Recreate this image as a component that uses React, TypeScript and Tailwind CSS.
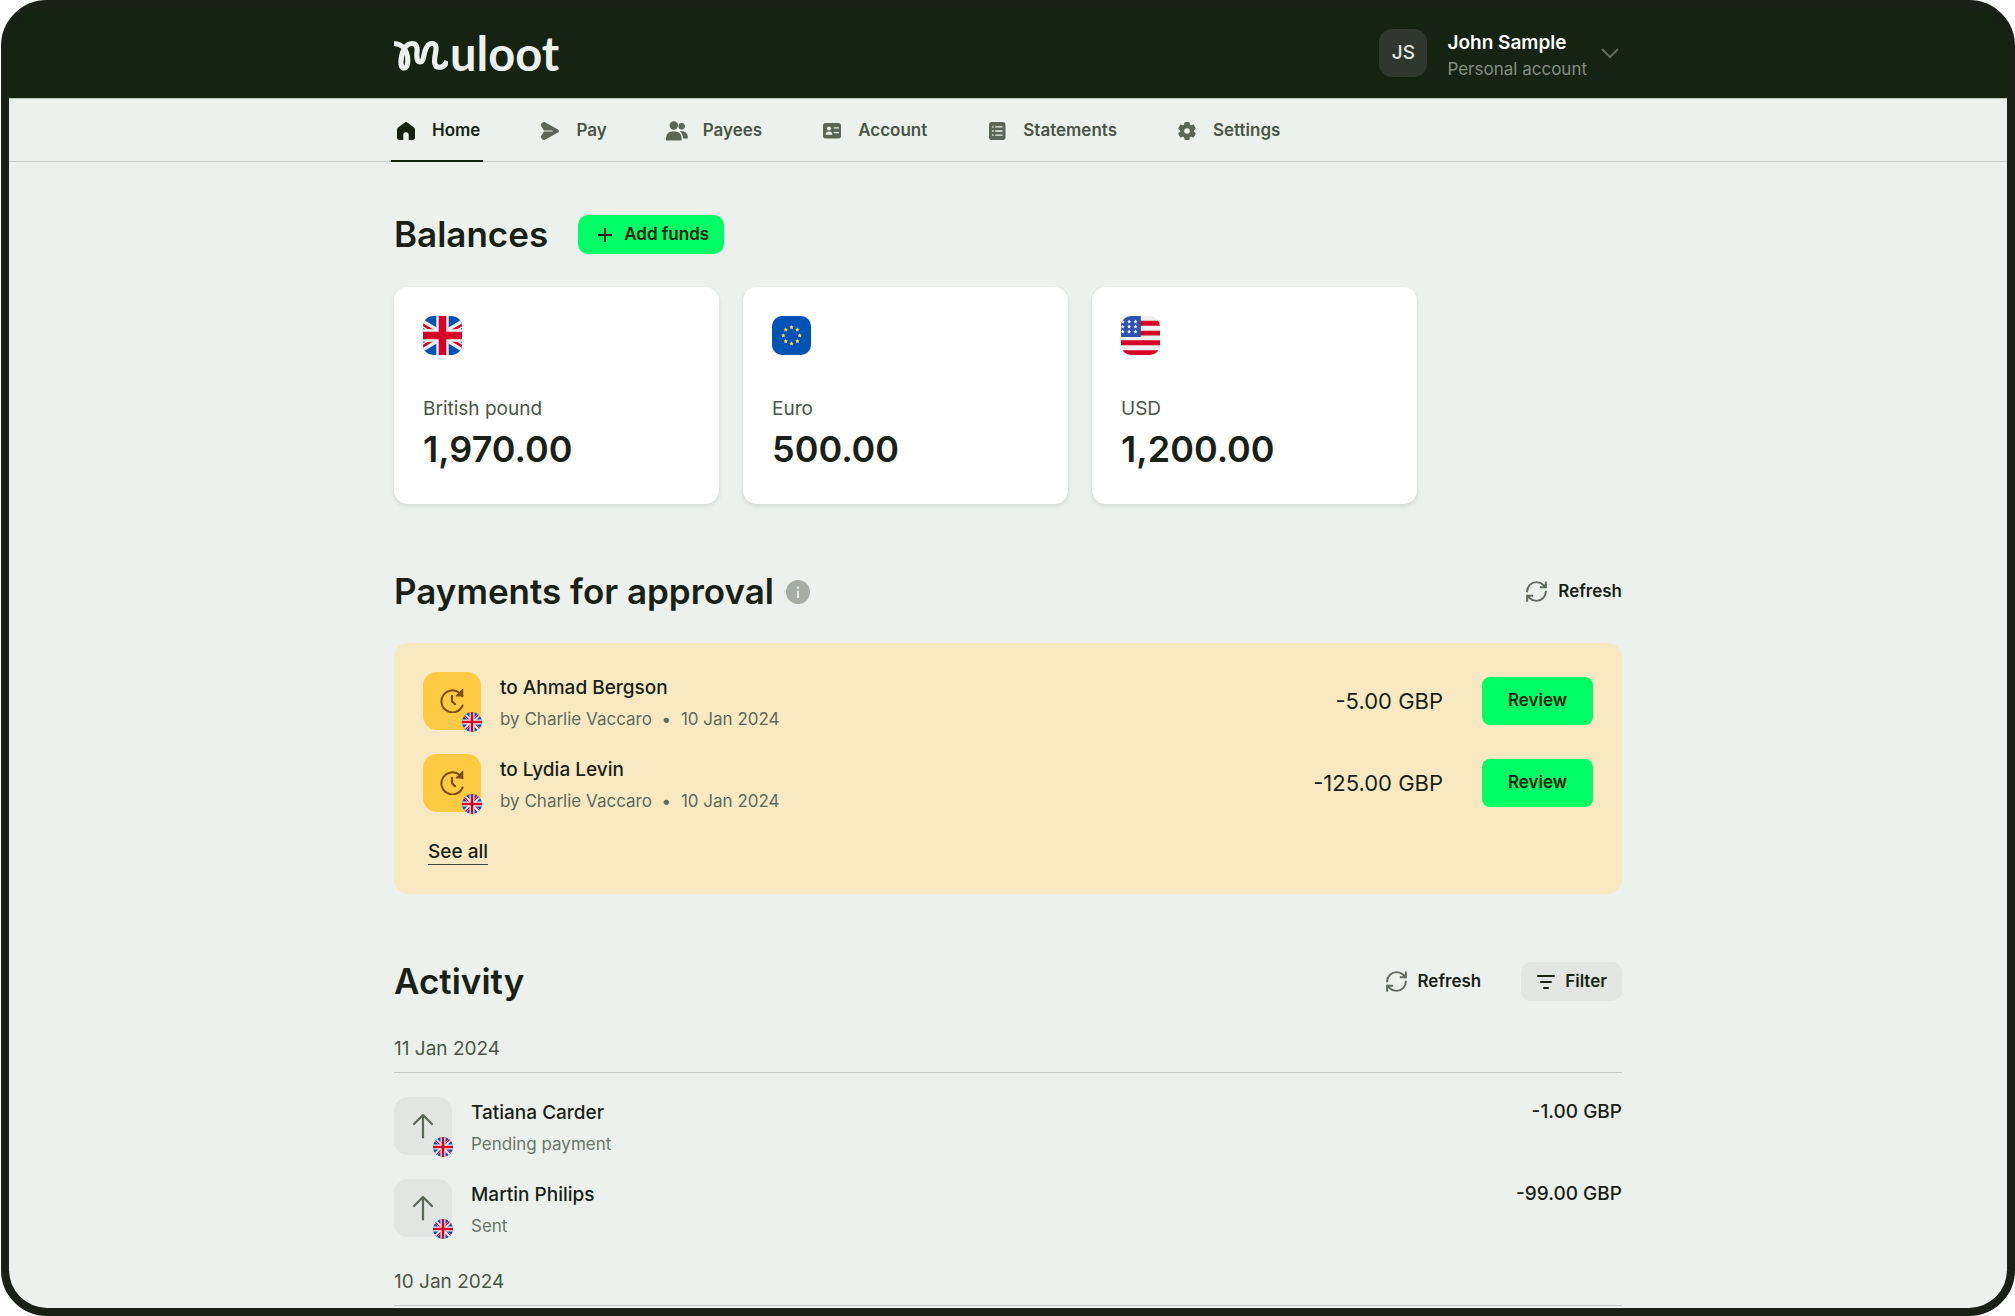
import type { ReactNode } from "react";
import { RefreshCw } from "lucide-react";

type Currency = "GBP" | "EUR" | "USD";

const navItems: { label: string; icon: ReactNode }[] = [
  { label: "Home", icon: <HomeIcon /> },
  { label: "Pay", icon: <PayIcon /> },
  { label: "Payees", icon: <PayeesIcon /> },
  { label: "Account", icon: <AccountIcon /> },
  { label: "Statements", icon: <StatementsIcon /> },
  { label: "Settings", icon: <SettingsIcon /> },
];

const balances: { name: string; amount: string; currency: Currency }[] = [
  { name: "British pound", amount: "1,970.00", currency: "GBP" },
  { name: "Euro", amount: "500.00", currency: "EUR" },
  { name: "USD", amount: "1,200.00", currency: "USD" },
];

const approvals = [
  { to: "Ahmad Bergson", by: "Charlie Vaccaro", date: "10 Jan 2024", amount: "-5.00 GBP" },
  { to: "Lydia Levin", by: "Charlie Vaccaro", date: "10 Jan 2024", amount: "-125.00 GBP" },
];

const activity = [
  {
    date: "11 Jan 2024",
    items: [
      { name: "Tatiana Carder", status: "Pending payment", amount: "-1.00 GBP" },
      { name: "Martin Philips", status: "Sent", amount: "-99.00 GBP" },
    ],
  },
  { date: "10 Jan 2024", items: [] },
];

export default function App() {
  return (
    <div className="h-screen bg-white pl-px font-['Inter',sans-serif] text-[#1a1f17]">
      <div className="flex h-full flex-col overflow-hidden rounded-[46px] border-8 border-[#1a1f17] bg-[#1a1f17]">
        <Header />
        <Nav />
        <main className="min-h-0 flex-1 bg-[#ecf1ed]">
          <div className="mx-auto w-full max-w-[1228px] pt-[53px]">
            <Balances />
            <Approvals />
            <Activity />
          </div>
        </main>
      </div>
    </div>
  );
}

function Header() {
  return (
    <header className="border-b border-[#b9c3b9] bg-[#162312]">
      <div className="mx-auto flex h-[90px] max-w-[1228px] items-center justify-between">
        <a href="#home" aria-label="muloot" className="flex items-start gap-[2px] text-[#ecf1ed]">
          <LogoMark />
          <span className="font-['Lato',sans-serif] text-[47px] leading-[44px] font-bold">
            uloot
          </span>
        </a>
        <button type="button" className="flex items-center gap-5 text-left">
          <span className="flex size-12 items-center justify-center rounded-[13px] bg-[#30372f] text-[19px] font-medium text-[#e3e8e3]">
            JS
          </span>
          <span className="flex flex-col pt-[5px]">
            <span className="text-[19px] leading-[26px] font-semibold text-white">
              John Sample
            </span>
            <span className="text-[17px] leading-[26px] text-[#858e83]">Personal account</span>
          </span>
          <svg viewBox="0 0 24 24" className="-ml-[9px] size-6" fill="none" aria-hidden="true">
            <path d="m4 8 8 8 8-8" stroke="#5f695d" strokeWidth="2" />
          </svg>
        </button>
      </div>
    </header>
  );
}

function Nav() {
  return (
    <nav className="border-b border-[#c3cac4] bg-[#ecf1ed]">
      <div className="mx-auto flex h-[62px] max-w-[1228px]">
        <ul className="-mx-[3px] flex gap-[52px]">
          {navItems.map((item, index) => (
            <li key={item.label} className="flex">
              <a
                href={`#${item.label.toLowerCase()}`}
                className={
                  index === 0
                    ? "-mb-px flex items-center gap-[14px] border-b-2 border-[#162312] px-[3px] pt-[3px] text-[17px] font-semibold text-[#162312]"
                    : "-mb-px flex items-center gap-[14px] border-b-2 border-transparent px-[3px] pt-[3px] text-[17px] font-semibold text-[#4a5547]"
                }
              >
                <span
                  className={
                    index === 0
                      ? "flex size-6 items-center justify-center"
                      : "flex size-6 items-center justify-center text-[#5b6659]"
                  }
                >
                  {item.icon}
                </span>
                {item.label}
              </a>
            </li>
          ))}
        </ul>
      </div>
    </nav>
  );
}

function Balances() {
  return (
    <section>
      <div className="flex items-center gap-[30px]">
        <SectionTitle>Balances</SectionTitle>
        <button
          type="button"
          className="flex h-[39px] items-center gap-[9px] rounded-[10px] bg-[#00ff66] pr-[15px] pl-[17px] text-[17px] font-semibold text-[#162312]"
        >
          <svg viewBox="0 0 20 20" className="size-5" fill="none" aria-hidden="true">
            <path d="M10 3v14M3 10h14" stroke="currentColor" strokeWidth="2" />
          </svg>
          Add funds
        </button>
      </div>
      <ul className="mt-[33px] flex gap-6">
        {balances.map((balance) => (
          <li
            key={balance.currency}
            className="w-[325px] rounded-[14px] bg-white p-[29px] pb-[30px] shadow-[0_2px_4px_rgba(26,31,23,0.12)]"
          >
            <Flag currency={balance.currency} />
            <p className="mt-[42px] text-[19px] leading-6 text-[#4a5547]">{balance.name}</p>
            <p className="mt-[3px] text-[36px] leading-[50px] font-semibold">{balance.amount}</p>
          </li>
        ))}
      </ul>
    </section>
  );
}

function Approvals() {
  return (
    <section className="mt-[68px]">
      <div className="flex items-center justify-between">
        <div className="flex items-center gap-3">
          <SectionTitle>Payments for approval</SectionTitle>
          <InfoIcon />
        </div>
        <RefreshButton />
      </div>
      <div className="mt-8 rounded-[14px] bg-[#f9e9c3] p-[29px]">
        <ul className="flex flex-col gap-5">
          {approvals.map((payment) => (
            <li key={payment.to} className="flex items-start gap-[19px]">
              <span className="relative flex size-[58px] items-center justify-center rounded-[14px] bg-[#ffca43]">
                <PendingIcon />
                <RoundFlag />
              </span>
              <div className="flex-1">
                <p className="text-[19px] leading-[32px] font-medium">to {payment.to}</p>
                <p className="flex text-[17px] leading-[30px] text-[#5f6a5e]">
                  by {payment.by}
                  <span className="w-[29px] text-center">•</span>
                  {payment.date}
                </p>
              </div>
              <div className="flex h-[58px] items-center gap-[39px]">
                <span className="text-[22px]">{payment.amount}</span>
                <button
                  type="button"
                  className="h-12 w-[111px] rounded-lg bg-[#00ff66] text-[17px] font-semibold text-[#162312]"
                >
                  Review
                </button>
              </div>
            </li>
          ))}
        </ul>
        <div className="mt-6 ml-[5px] flex">
          <a
            href="#approvals"
            className="border-b border-[#3c4239] text-[19px] leading-6 font-medium"
          >
            See all
          </a>
        </div>
      </div>
    </section>
  );
}

function Activity() {
  return (
    <section className="mt-[68px]">
      <div className="flex items-center justify-between">
        <SectionTitle>Activity</SectionTitle>
        <div className="flex items-center gap-10">
          <RefreshButton />
          <button
            type="button"
            className="flex h-[39px] items-center gap-[9px] rounded-[10px] bg-[#e2e5e1] px-[15px] text-[17px] font-semibold text-[#162312]"
          >
            <svg viewBox="0 0 20 20" className="size-5" fill="none" aria-hidden="true">
              <path
                d="M2 4h16M5 10h10M8 16h4"
                stroke="currentColor"
                strokeWidth="2"
                strokeLinecap="round"
              />
            </svg>
            Filter
          </button>
        </div>
      </div>
      <div className="mt-9 flex flex-col gap-[29px]">
        {activity.map((day) => (
          <div key={day.date}>
            <h3 className="border-b border-[#c3cac4] pb-[11px] text-[19px] leading-6 text-[#4a5547]">
              {day.date}
            </h3>
            <ul className="mt-6 flex flex-col gap-5">
              {day.items.map((item) => (
                <li key={item.name} className="flex items-start gap-[19px]">
                  <span className="relative flex size-[58px] items-center justify-center rounded-[14px] bg-[#e2e5e1]">
                    <SentIcon />
                    <RoundFlag />
                  </span>
                  <div className="flex-1">
                    <p className="text-[19px] leading-[32px] font-medium">{item.name}</p>
                    <p className="text-[17px] leading-[30px] text-[#6a7568]">{item.status}</p>
                  </div>
                  <span className="text-[19px] leading-[30px] font-medium">{item.amount}</span>
                </li>
              ))}
            </ul>
          </div>
        ))}
      </div>
    </section>
  );
}

function SectionTitle({ children }: { children: ReactNode }) {
  return <h2 className="text-[35px] leading-[39px] font-semibold">{children}</h2>;
}

function RefreshButton() {
  return (
    <button type="button" className="flex items-center gap-[9px] text-[17px] font-semibold">
      <RefreshCw className="size-[25px] text-[#5f6a5e]" strokeWidth={1.9} aria-hidden="true" />
      Refresh
    </button>
  );
}

function LogoMark() {
  return (
    <svg viewBox="0 0 54 42" className="h-[42px] w-[54px]" fill="none" aria-hidden="true">
      <path
        d="M0 12.5C8 13 13.5 19 13.8 29C14 35 12 37 10 37C7.5 37 6.8 34 7 30C7.5 20 12 12.5 18 12.5C23 12.5 23.5 17 23 21C22.5 26 23 31 26 31C29.5 31 29.5 25 31 20C32.5 15 35 12.5 38 12.5C42.5 12.5 42.5 17 41.5 22C40.5 27 39 36 44.5 36.2C48.5 36.5 51.5 34 53 30"
        stroke="currentColor"
        strokeWidth="5.2"
      />
    </svg>
  );
}

function HomeIcon() {
  return (
    <svg viewBox="0 0 18 18" className="size-[18px]" fill="currentColor" aria-hidden="true">
      <path d="M7.8.4 1 5.4C.4 5.9 0 6.6 0 7.4V15.5A2.5 2.5 0 0 0 2.5 18H6.300V13a2.7 2.7 0 0 1 5.4 0v5h3.8A2.5 2.5 0 0 0 18 15.5V7.4c0-.8-.4-1.5-1-2L10.2.4a2 2 0 0 0-2.4 0Z" />
    </svg>
  );
}

function PayIcon() {
  return (
    <svg viewBox="0 0 18 18" className="size-[18px]" fill="currentColor" aria-hidden="true">
      <path d="M0 3.2C0 .9 2.4-.6 4.4.4L17 7.4c1.3.7 1.3 2.5 0 3.2L4.4 17.6C2.4 18.6 0 17.1 0 14.8c0-1.8 2-3.1 3-5.2h8.5V8.4H3C2 6.3 0 5 0 3.2Z" />
    </svg>
  );
}

function PayeesIcon() {
  return (
    <svg
      viewBox="0 0 22 20"
      className="h-5 w-[22px] shrink-0"
      fill="currentColor"
      aria-hidden="true"
    >
      <circle cx="7.8" cy="4.5" r="4.2" />
      <path d="M0 17.5C0 13.5 2.5 10.5 6 10.5h3.5c3.5 0 6 3 6 7v2H0Z" />
      <circle cx="15.7" cy="5.3" r="3.2" />
      <path d="M13.8 10.2h2.4c3.4 0 5.6 2.6 5.6 5.6v1.7h-4.8c0-3-1-5.5-3.2-7.3Z" />
    </svg>
  );
}

function AccountIcon() {
  return (
    <svg viewBox="0 0 18 16" className="h-4 w-[18px]" aria-hidden="true">
      <rect width="18" height="15.5" rx="2.8" fill="currentColor" />
      <g fill="#ecf1ed">
        <circle cx="6" cy="5.6" r="2" />
        <path d="M2.7 11.7c0-2 1.3-3.2 3.3-3.2s3.3 1.2 3.3 3.2Z" />
        <path d="M10.8 4.3h5v1.3h-5zM10.8 9h5v1.3h-5z" />
      </g>
    </svg>
  );
}

function StatementsIcon() {
  return (
    <svg viewBox="0 0 17 18" className="h-[18px] w-[17px]" aria-hidden="true">
      <rect width="16.5" height="18" rx="2.8" fill="currentColor" />
      <path
        d="M3 4.8h1.6M6.2 4.8h7.3M3 9h1.6M6.2 9h7.3M3 13.2h1.6M6.2 13.2h7.3"
        stroke="#ecf1ed"
        strokeWidth="1.3"
      />
    </svg>
  );
}

function SettingsIcon() {
  return (
    <svg viewBox="0 0 18 18" className="size-[18px]" fill="currentColor" aria-hidden="true">
      {[0, 60, 120].map((angle) => (
        <rect
          key={angle}
          x="6.3"
          width="5.4"
          height="18"
          rx="1.3"
          transform={`rotate(${angle} 9 9)`}
        />
      ))}
      <circle cx="9" cy="9" r="6.9" />
      <circle cx="9" cy="9" r="2.8" fill="#ecf1ed" />
    </svg>
  );
}

function InfoIcon() {
  return (
    <svg viewBox="0 0 24 24" className="size-6" role="img" aria-label="More information">
      <circle cx="12" cy="12" r="12" fill="#a5ada5" />
      <circle cx="12" cy="7.8" r="1.2" fill="#ecf1ed" />
      <path d="M12 11v7" stroke="#ecf1ed" strokeWidth="1.8" />
    </svg>
  );
}

function PendingIcon() {
  return (
    <svg viewBox="0 0 24 24" className="size-6" fill="none" stroke="#7d4d12" aria-hidden="true">
      <path
        d="M22.6 16.5A11 11 0 1 1 19.8 4.2L22.5 7"
        strokeWidth="2"
        strokeLinecap="round"
      />
      <path d="M22.7.4V7H16.3Z" fill="#7d4d12" strokeWidth="1.2" strokeLinejoin="round" />
      <path
        d="M12 6.8v5.4l3 3"
        strokeWidth="2.2"
        strokeLinecap="round"
        strokeLinejoin="round"
      />
    </svg>
  );
}

function SentIcon() {
  return (
    <svg viewBox="0 0 24 26" className="h-[26px] w-6" fill="none" aria-hidden="true">
      <path
        d="M12 24.5V2M3 11l9-9 9 9"
        stroke="#5b6659"
        strokeWidth="2.2"
        strokeLinecap="round"
        strokeLinejoin="round"
      />
    </svg>
  );
}

function RoundFlag() {
  return (
    <svg
      viewBox="0 0 20 20"
      className="absolute -right-px -bottom-[2px] size-5 rounded-full"
      aria-hidden="true"
    >
      <rect width="20" height="20" fill="#0052b4" />
      <path d="M0 0 20 20M20 0 0 20" stroke="#f0f0f0" strokeWidth="3.2" />
      <path
        d="M2 3 10 11M17 2 9 10M11 9l7 8M3 18l8-8"
        stroke="#d80027"
        strokeWidth="1.1"
      />
      <path d="M10 0v20M0 10h20" stroke="#f0f0f0" strokeWidth="5" />
      <path d="M10 0v20M0 10h20" stroke="#d80027" strokeWidth="2.6" />
    </svg>
  );
}

function Flag({ currency }: { currency: Currency }) {
  if (currency === "GBP") {
    return (
      <svg viewBox="0 0 39 39" className="size-[39px] rounded-[10px]" aria-hidden="true">
        <rect width="39" height="39" fill="#0052b4" />
        <path d="M-12.5 0 51.5 39M51.5 0-12.5 39" stroke="#f0f0f0" strokeWidth="7.5" />
        <path
          d="M-12.5 1.2 19.5 20.7M-12.5 37.8 19.5 18.3M51.5 1.2 19.5 20.7M51.5 37.8 19.5 18.3"
          stroke="#d80027"
          strokeWidth="2.6"
        />
        <path d="M19.5 0v39M0 19.5h39" stroke="#f0f0f0" strokeWidth="12.4" />
        <path d="M19.5 0v39M0 19.5h39" stroke="#d80027" strokeWidth="7.6" />
      </svg>
    );
  }

  if (currency === "EUR") {
    return (
      <svg viewBox="0 0 39 39" className="size-[39px] rounded-[10px]" aria-hidden="true">
        <rect width="39" height="39" fill="#0052b4" />
        {[0, 45, 90, 135, 180, 225, 270, 315].map((angle) => {
          const radians = (angle * Math.PI) / 180;
          return (
            <Star
              key={angle}
              x={19.5 + 8.2 * Math.sin(radians)}
              y={19.5 - 8.2 * Math.cos(radians)}
              size={2.3}
              fill="#ffda44"
            />
          );
        })}
      </svg>
    );
  }

  return (
    <svg viewBox="0 0 39 39" className="size-[39px] rounded-[10px]" aria-hidden="true">
      <rect width="39" height="39" fill="#f0f0f0" />
      <path
        d="M0 7.3h39M0 17.1h39M0 26.8h39M0 36.6h39"
        stroke="#d80027"
        strokeWidth="4.9"
      />
      <rect width="19.8" height="21" fill="#2e52b2" />
      {[5.7, 10.7, 15.7].map((y) =>
        [1.7, 8.1, 14.5].map((x) => (
          <Star key={`${x}-${y}`} x={x} y={y} size={2.1} fill="#f0f0f0" />
        )),
      )}
    </svg>
  );
}

function Star({ x, y, size, fill }: { x: number; y: number; size: number; fill: string }) {
  const points = Array.from({ length: 10 }, (_, i) => {
    const radius = i % 2 === 0 ? size : size * 0.5;
    const angle = (i * Math.PI) / 5;
    return `${x + radius * Math.sin(angle)},${y - radius * Math.cos(angle)}`;
  }).join(" ");

  return <polygon points={points} fill={fill} />;
}
